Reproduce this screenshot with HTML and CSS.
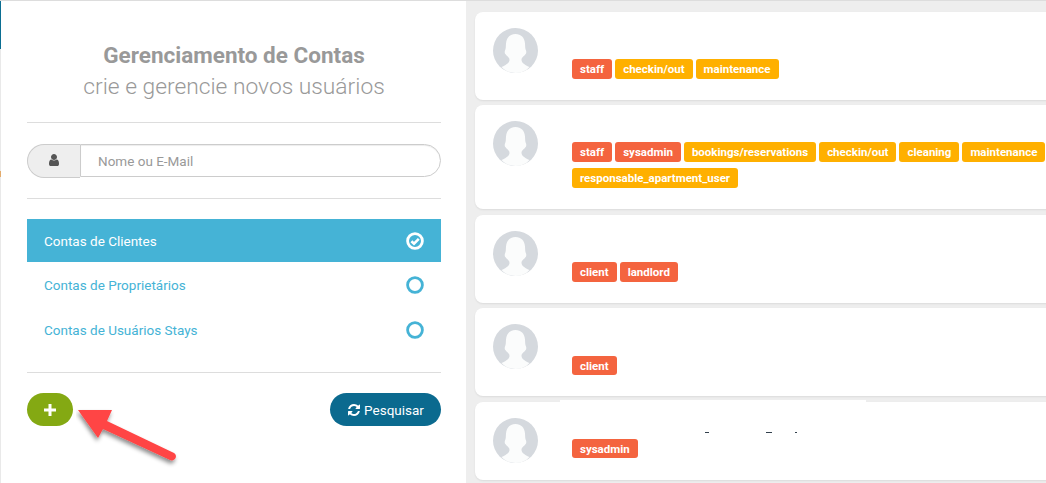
FILE: index.html
```html
<!DOCTYPE html>
<html lang="pt-BR">
<head>
<meta charset="utf-8">
<title>Gerenciamento de Contas</title>
<link rel="stylesheet" href="styles.css">
</head>
<body>
<div class="page">
  <div class="edge"><span class="edge-teal"></span><span class="edge-dot"></span></div>
  <aside class="panel">
    <h1 class="title"><strong>Gerenciamento de Contas</strong><span>crie e gerencie novos usuários</span></h1>
    <div class="rule"></div>
    <div class="search">
      <span class="addon">
        <svg class="icon-user" viewBox="0 0 1792 1792"><path d="M1536 1399q0 109-62.5 187t-150.5 78h-854q-88 0-150.5-78t-62.5-187q0-85 8.5-160.5t31.5-152 58.5-131 94-89 134.5-34.5q131 128 313 128t313-128q76 0 134.5 34.5t94 89 58.5 131 31.5 152 8.5 160.5zm-256-887q0 159-112.5 271.5t-271.5 112.5-271.5-112.5-112.5-271.5 112.5-271.5 271.5-112.5 271.5 112.5 112.5 271.5z"/></svg>
      </span>
      <input class="field" type="text" placeholder="Nome ou E-Mail">
    </div>
    <div class="rule rule-after-search"></div>
    <ul class="options">
      <li class="option option-active">Contas de Clientes
        <svg class="mark" viewBox="0 0 18 18"><circle cx="9" cy="9" r="7.4"/><path d="M5.4 9.2 8 11.7 12.8 6.8"/></svg>
      </li>
      <li class="option">Contas de Proprietários
        <svg class="mark" viewBox="0 0 18 18"><circle cx="9" cy="9" r="7.4"/></svg>
      </li>
      <li class="option">Contas de Usuários Stays
        <svg class="mark" viewBox="0 0 18 18"><circle cx="9" cy="9" r="7.4"/></svg>
      </li>
    </ul>
    <div class="rule rule-after-options"></div>
    <div class="actions">
      <button class="btn btn-add" type="button">
        <svg class="icon-plus" viewBox="0 0 12 12"><path d="M4.5 0h3v4.5H12v3H7.5V12h-3V7.5H0v-3h4.5z"/></svg>
      </button>
      <button class="btn btn-search" type="button">
        <svg class="icon-refresh" viewBox="0 0 1792 1792"><path d="M1639 1056q0 5-1 7-64 268-268 434.5t-478 166.5q-146 0-282.5-55t-243.5-157l-129 129q-19 19-45 19t-45-19-19-45v-448q0-26 19-45t45-19h448q26 0 45 19t19 45-19 45l-137 137q71 66 161 102t187 36q134 0 250-65t186-179q11-17 53-117 8-23 30-23h192q13 0 22.5 9.5t9.5 22.5zm25-800v448q0 26-19 45t-45 19h-448q-26 0-45-19t-19-45 19-45l138-138q-148-137-349-137-134 0-250 65t-186 179q-11 17-53 117-8 23-30 23h-199q-13 0-22.5-9.5t-9.5-22.5v-7q65-268 270-434.5t480-166.5q146 0 284 55.5t245 156.5l130-129q19-19 45-19t45 19 19 45z"/></svg>
        Pesquisar
      </button>
    </div>
  </aside>
  <main class="list">
    <article class="card card-a">
      <svg class="avatar" viewBox="0 0 45 45"><use href="#person"/></svg>
      <div class="tags">
        <span class="tag tag-red">staff</span><span class="tag">checkin/out</span><span class="tag">maintenance</span>
      </div>
    </article>
    <article class="card card-b">
      <svg class="avatar" viewBox="0 0 45 45"><use href="#person"/></svg>
      <div class="tags">
        <span class="tag tag-red">staff</span><span class="tag tag-red">sysadmin</span><span class="tag">bookings/reservations</span><span class="tag">checkin/out</span><span class="tag">cleaning</span><span class="tag">maintenance</span><span class="tag">responsable_apartment_user</span>
      </div>
    </article>
    <article class="card card-a">
      <svg class="avatar" viewBox="0 0 45 45"><use href="#person"/></svg>
      <div class="tags">
        <span class="tag tag-red">client</span><span class="tag tag-red">landlord</span>
      </div>
    </article>
    <article class="card card-a">
      <svg class="avatar" viewBox="0 0 45 45"><use href="#person"/></svg>
      <div class="tags">
        <span class="tag tag-red">client</span>
      </div>
    </article>
    <article class="card card-c">
      <div class="patch"><i class="speck speck-1"></i><i class="speck speck-2"></i><i class="speck speck-3"></i></div>
      <svg class="avatar" viewBox="0 0 45 45"><use href="#person"/></svg>
      <div class="tags">
        <span class="tag tag-red">sysadmin</span>
      </div>
    </article>
  </main>
  <svg class="arrow" viewBox="0 0 120 70" aria-hidden="true">
    <defs>
      <filter id="arrow-shadow" x="-20%" y="-20%" width="140%" height="150%">
        <feDropShadow dx="-1" dy="3" stdDeviation="2.2" flood-color="#000" flood-opacity=".45"/>
      </filter>
    </defs>
    <path filter="url(#arrow-shadow)" d="M2 3H36L31 14 98 46C102.500 49 98.500 55 94 53L27 22 22 31Z"/>
  </svg>
</div>
<svg class="defs" aria-hidden="true">
  <symbol id="person" viewBox="0 0 45 45">
    <circle class="av-bg" cx="22.500" cy="22.500" r="22.500"/>
    <path class="av-fg" d="M22.500 6C17 6 13.500 9.500 13 15.500C12.800 18 13 20.500 12 22.500C11.500 23.500 11.600 25.500 12.800 26.500C14 28.500 16.500 29 16.500 32C16.500 35 12 37.500 8.500 39C12 43 17 45 22.500 45C28 45 33 43 36.500 39C33 37.500 28.500 35 28.500 32C28.500 29 31 28.500 32.200 26.500C33.400 25.500 33.500 23.500 33 22.500C32 20.500 32.200 18 32 15.500C31.500 9.500 28 6 22.500 6Z"/>
  </symbol>
</svg>
</body>
</html>
```
FILE: styles.css
```css
* { box-sizing: border-box; }

html, body {
  margin: 0;
  height: 100%;
  overflow: hidden;
}

body {
  font-family: Roboto, "Liberation Sans", sans-serif;
  background: #eeeeee;
}

.page {
  position: relative;
  display: flex;
  height: 483px;
  width: 1046px;
  overflow: hidden;
  border-top: 1px solid #dddddd;
}

.edge {
  position: relative;
  flex: none;
  width: 1px;
  background: #e9e9e9;
}

.edge-teal {
  display: block;
  height: 48px;
  background: #0b6e92;
}

.edge-dot {
  display: block;
  height: 6px;
  margin-top: 122px;
  background: #e3ab6c;
}

/* left panel */
.panel {
  flex: none;
  width: 465px;
  padding: 38px 25px 0 26px;
  background: #ffffff;
}

.title {
  margin: 0;
  color: #999999;
  text-align: center;
  font-weight: 400;
  font-size: 21px;
  line-height: 32px;
}

.title strong,
.title span {
  display: block;
}

.title strong {
  font-weight: 700;
  font-size: 22.500px;
}

.title span {
  font-weight: 300;
  font-size: 22.800px;
}

.rule {
  height: 1px;
  margin-top: 19px;
  background: #dddddd;
}

.rule-after-search { margin-top: 21px; }
.rule-after-options { margin-top: 20px; }

.search {
  display: flex;
  height: 33px;
  margin-top: 21px;
}

.addon {
  flex: none;
  display: flex;
  align-items: center;
  justify-content: center;
  width: 53px;
  height: 34px;
  background: #eeeeee;
  border: 1px solid #cccccc;
  border-right: 0;
  border-radius: 17px 0 0 17px;
}

.icon-user {
  width: 14px;
  height: 14px;
  margin-top: -3px;
  fill: #555555;
}

.field {
  flex: 1;
  min-width: 0;
  height: 33px;
  padding: 0 17px;
  border: 1px solid #cccccc;
  border-radius: 0 17px 17px 0;
  background: #ffffff;
  font: 400 13.500px Roboto, sans-serif;
  color: #555555;
  outline: 0;
  box-shadow: inset 0 1px 1px rgba(0, 0, 0, .075);
}

.field::placeholder {
  color: #999999;
  opacity: 1;
}

.options {
  margin: 20px 0 0;
  padding: 0;
  list-style: none;
}

.option {
  display: flex;
  align-items: center;
  justify-content: space-between;
  height: 45px;
  padding: 0 17px;
  color: #45b3d6;
  font-size: 13.500px;
}

.option-active {
  height: 43px;
  background: #45b3d6;
  color: #ffffff;
}

.mark {
  width: 18px;
  height: 18px;
  fill: none;
  stroke: #45b3d6;
  stroke-width: 2.800;
}

.option-active .mark { stroke: #ffffff; }
.option-active .mark path { stroke-width: 2.600; }

.actions {
  display: flex;
  align-items: flex-start;
  justify-content: space-between;
  margin-top: 20px;
}

.btn {
  display: inline-flex;
  align-items: center;
  justify-content: center;
  height: 33px;
  border: 0;
  border-radius: 17px;
  color: #ffffff;
  font: 400 13.500px Roboto, sans-serif;
}

.btn-add {
  width: 46px;
  background: #84a913;
}

.icon-plus {
  width: 12px;
  height: 12px;
  fill: #ffffff;
}

.btn-search {
  width: 111px;
  gap: 3px;
  padding: 0;
  background: #0b6a8f;
}

.icon-refresh {
  width: 14px;
  height: 14px;
  fill: #ffffff;
}

/* right list */
.list {
  flex: none;
  display: flex;
  flex-direction: column;
  gap: 5.500px;
  width: 640px;
  padding: 11px 0 0 9px;
}

.card {
  position: relative;
  display: flex;
  flex: none;
  width: 640px;
  padding: 16px 0 0 18px;
  background: #ffffff;
  border-radius: 8px;
  box-shadow: 0 1px 2px rgba(0, 0, 0, .08);
}

.card-a { height: 87.950px; }
.card-b { height: 103.750px; }
.card-c { height: 78px; }

.avatar {
  flex: none;
  width: 45px;
  height: 45px;
}

.av-bg { fill: #d5d9de; }
.av-fg { fill: #fbfcfc; }

.tags {
  display: flex;
  flex-wrap: wrap;
  align-content: flex-start;
  gap: 6px 3px;
  width: 478px;
  margin-left: 34px;
}

.card-a .tags { padding-top: 31.400px; }
.card-b .tags { padding-top: 21px; }
.card-c .tags { padding-top: 21px; }

.tag {
  display: inline-block;
  height: 19.600px;
  padding: 0 8px;
  border-radius: 3px;
  background: #ffb000;
  color: #ffffff;
  font-weight: 700;
  font-size: 11.500px;
  line-height: 20px;
  white-space: nowrap;
}

.tag-red { background: #f4643f; }

/* white cover over the card name row */
.patch {
  position: absolute;
  left: 85px;
  top: -2px;
  width: 306px;
  height: 31px;
  background: #ffffff;
}

.speck {
  position: absolute;
  top: 32px;
  height: 1px;
  background: #33414d;
}

.speck-1 { left: 145px; width: 4px; }
.speck-2 { left: 206px; width: 6px; }
.speck-3 { left: 235px; width: 2px; }

/* annotation arrow */
.arrow {
  position: absolute;
  left: 76px;
  top: 406px;
  width: 120px;
  height: 70px;
  fill: #ff4444;
}

.defs {
  position: absolute;
  width: 0;
  height: 0;
}
```
